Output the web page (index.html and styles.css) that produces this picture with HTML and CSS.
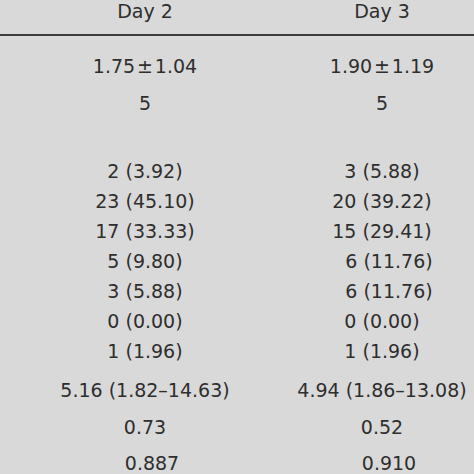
FILE: index.html
```html
<!DOCTYPE html>
<html lang="en">
<head>
    <meta charset="UTF-8">
    <meta name="viewport" content="width=device-width, initial-scale=1.0">
    <title>Day 2 / Day 3</title>
    <link rel="stylesheet" href="styles.css">
</head>
<body>
    <div class="table">
        <div class="row head">
            <span class="cell">Day 2</span>
            <span class="cell">Day 3</span>
        </div>

        <div class="body">
            <div class="row tall">
                <span class="cell">1.75&#8202;&plusmn;&#8202;1.04</span>
                <span class="cell">1.90&#8202;&plusmn;&#8202;1.19</span>
            </div>
            <div class="row tall">
                <span class="cell">5</span>
                <span class="cell">5</span>
            </div>

            <div class="row blank"></div>

            <div class="row sub">
                <span class="cell">2 (3.92)</span>
                <span class="cell">3 (5.88)</span>
            </div>
            <div class="row sub">
                <span class="cell">23 (45.10)</span>
                <span class="cell">20 (39.22)</span>
            </div>
            <div class="row sub">
                <span class="cell">17 (33.33)</span>
                <span class="cell">15 (29.41)</span>
            </div>
            <div class="row sub">
                <span class="cell">5 (9.80)</span>
                <span class="cell shift">6 (11.76)</span>
            </div>
            <div class="row sub">
                <span class="cell">3 (5.88)</span>
                <span class="cell shift">6 (11.76)</span>
            </div>
            <div class="row sub">
                <span class="cell">0 (0.00)</span>
                <span class="cell">0 (0.00)</span>
            </div>
            <div class="row sub">
                <span class="cell">1 (1.96)</span>
                <span class="cell">1 (1.96)</span>
            </div>

            <div class="row stat first">
                <span class="cell">5.16 (1.82&ndash;14.63)</span>
                <span class="cell">4.94 (1.86&ndash;13.08)</span>
            </div>
            <div class="row stat">
                <span class="cell">0.73</span>
                <span class="cell">0.52</span>
            </div>
            <div class="row stat">
                <span class="cell shift">0.887</span>
                <span class="cell shift">0.910</span>
            </div>
        </div>
    </div>
</body>
</html>
```

FILE: styles.css
```css
body {
    margin: 0;
    background: #d9d9d9;
    color: #2e2e2e;
    font-family: "DejaVu Sans", "Liberation Sans", sans-serif;
    font-size: 19px;
    height: 474px;
    overflow: hidden;
}

.table {
    width: 474px;
}

.row {
    display: grid;
    grid-template-columns: 250px 176px;
    column-gap: 24px;
    padding-left: 20px;
    white-space: nowrap;
}

.cell {
    text-align: center;
}

.head {
    line-height: 23px;
    padding-bottom: 11px;
    border-bottom: 2px solid #3c3c3c;
}

.body {
    padding-top: 12px;
}

.tall {
    line-height: 37px;
}

.blank {
    height: 34px;
}

.sub {
    line-height: 30px;
}

.stat {
    line-height: 36.5px;
}

.stat.first {
    margin-top: 6px;
}

.shift {
    padding-left: 14px;
}
```
